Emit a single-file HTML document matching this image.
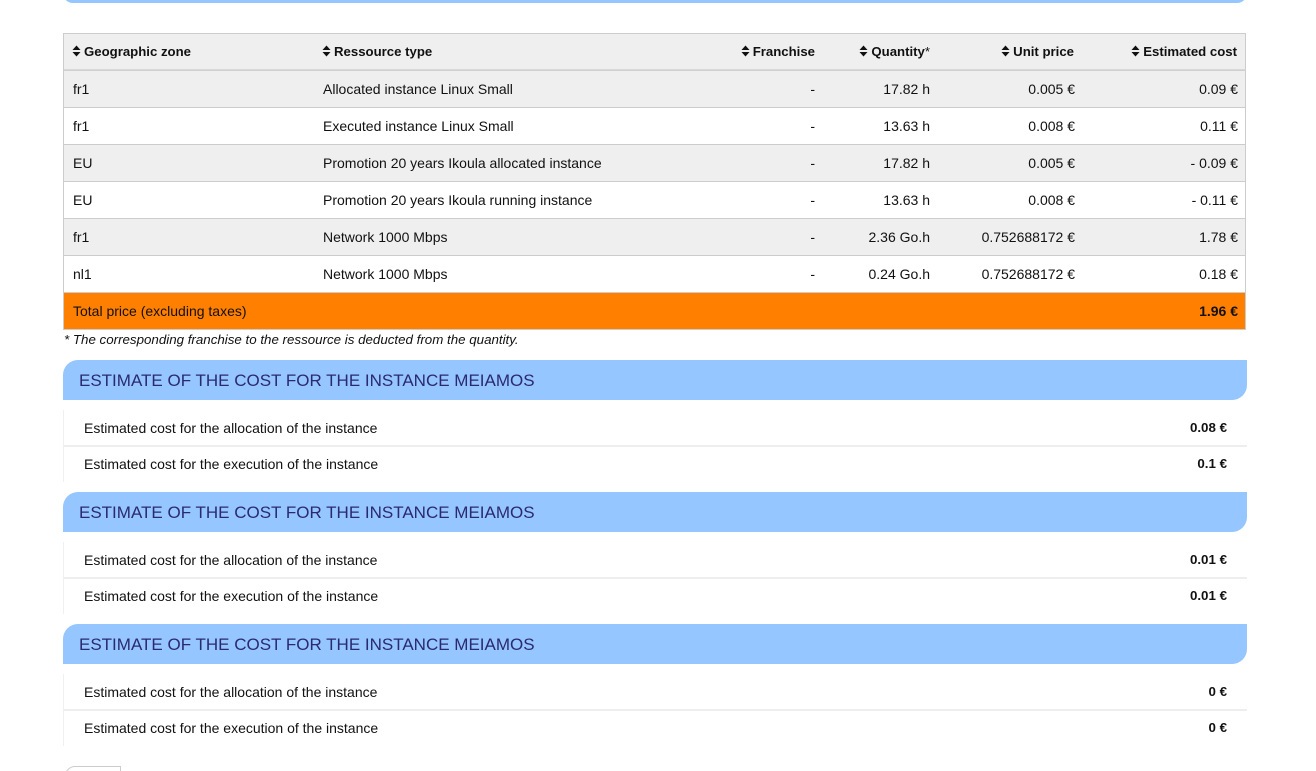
<!DOCTYPE html>
<html><head><meta charset="utf-8">
<style>
html,body{margin:0;padding:0;background:#fff;width:1316px;height:771px;overflow:hidden}
body{position:relative;font-family:"Liberation Sans",Arial,sans-serif;font-size:14px;color:#111}
.a{position:absolute}
.t{position:absolute;white-space:nowrap;line-height:16px}
.r{text-align:right}
.b{font-weight:bold}
.h{font-size:13.2px;top:44px}
.v{font-size:13.33px}
.row{position:absolute;left:63px;width:1183px;height:37px;box-sizing:border-box;border:1px solid #ccc;border-bottom:0}
.g{background:#efefef}
.w{background:#fff}
.bar{position:absolute;left:63px;width:1184px;height:40px;background:#95c6ff;border-radius:15px 0 15px 0}
.bar span{position:absolute;left:16px;top:12px;font-size:17px;line-height:18px;color:#2b2a6f;white-space:nowrap}
.ll{position:absolute;left:63px;width:1px;height:72px;background:#f0f0f0}
.sep{position:absolute;left:63px;width:1184px;height:2px;background:#eee}
svg.s{position:absolute;width:9px;height:12px;top:45px}
</style></head><body>

<div class="a" style="left:63px;top:-12px;width:1184px;height:15px;background:#95c6ff;border-radius:0 0 10px 10px"></div>

<div class="row g" style="top:33px;height:38px;border-bottom:2px solid #d8d8d8"></div>
<div class="row g" style="top:70px;border-top:1px solid #d0d0d0"></div>
<div class="row w" style="top:107px"></div>
<div class="row g" style="top:144px"></div>
<div class="row w" style="top:181px"></div>
<div class="row g" style="top:218px"></div>
<div class="row w" style="top:255px"></div>
<div class="row" style="top:292px;background:#ff7f00;height:38px;border-bottom:1px solid #ccc"></div>

<svg class="s" style="left:72px" viewBox="0 0 9 12"><path d="M4.500 0.500L8.500 5H0.500ZM4.500 11.500L0.500 7H8.500Z" fill="#111"/></svg>
<div class="t b h" style="left:84px">Geographic zone</div>
<svg class="s" style="left:322px" viewBox="0 0 9 12"><path d="M4.500 0.500L8.500 5H0.500ZM4.500 11.500L0.500 7H8.500Z" fill="#111"/></svg>
<div class="t b h" style="left:334px">Ressource type</div>
<svg class="s" style="left:741px" viewBox="0 0 9 12"><path d="M4.500 0.500L8.500 5H0.500ZM4.500 11.500L0.500 7H8.500Z" fill="#111"/></svg>
<div class="t b r h" style="right:501px">Franchise</div>
<svg class="s" style="left:859px" viewBox="0 0 9 12"><path d="M4.500 0.500L8.500 5H0.500ZM4.500 11.500L0.500 7H8.500Z" fill="#111"/></svg>
<div class="t r h" style="right:386px"><b>Quantity</b>*</div>
<svg class="s" style="left:1001px" viewBox="0 0 9 12"><path d="M4.500 0.500L8.500 5H0.500ZM4.500 11.500L0.500 7H8.500Z" fill="#111"/></svg>
<div class="t b r h" style="right:242px">Unit price</div>
<svg class="s" style="left:1131px" viewBox="0 0 9 12"><path d="M4.500 0.500L8.500 5H0.500ZM4.500 11.500L0.500 7H8.500Z" fill="#111"/></svg>
<div class="t b r h" style="right:79px">Estimated cost</div>

<div class="t" style="left:73px;top:81px">fr1</div>
<div class="t" style="left:323px;top:81px">Allocated instance Linux Small</div>
<div class="t r" style="right:501px;top:81px">-</div>
<div class="t r" style="right:386px;top:81px">17.82 h</div>
<div class="t r" style="right:241px;top:81px">0.005 €</div>
<div class="t r" style="right:78px;top:81px">0.09 €</div>

<div class="t" style="left:73px;top:118px">fr1</div>
<div class="t" style="left:323px;top:118px">Executed instance Linux Small</div>
<div class="t r" style="right:501px;top:118px">-</div>
<div class="t r" style="right:386px;top:118px">13.63 h</div>
<div class="t r" style="right:241px;top:118px">0.008 €</div>
<div class="t r" style="right:78px;top:118px">0.11 €</div>

<div class="t" style="left:73px;top:155px">EU</div>
<div class="t" style="left:323px;top:155px">Promotion 20 years Ikoula allocated instance</div>
<div class="t r" style="right:501px;top:155px">-</div>
<div class="t r" style="right:386px;top:155px">17.82 h</div>
<div class="t r" style="right:241px;top:155px">0.005 €</div>
<div class="t r" style="right:78px;top:155px">- 0.09 €</div>

<div class="t" style="left:73px;top:192px">EU</div>
<div class="t" style="left:323px;top:192px">Promotion 20 years Ikoula running instance</div>
<div class="t r" style="right:501px;top:192px">-</div>
<div class="t r" style="right:386px;top:192px">13.63 h</div>
<div class="t r" style="right:241px;top:192px">0.008 €</div>
<div class="t r" style="right:78px;top:192px">- 0.11 €</div>

<div class="t" style="left:73px;top:229px">fr1</div>
<div class="t" style="left:323px;top:229px">Network 1000 Mbps</div>
<div class="t r" style="right:501px;top:229px">-</div>
<div class="t r" style="right:386px;top:229px">2.36 Go.h</div>
<div class="t r" style="right:241px;top:229px">0.752688172 €</div>
<div class="t r" style="right:78px;top:229px">1.78 €</div>

<div class="t" style="left:73px;top:266px">nl1</div>
<div class="t" style="left:323px;top:266px">Network 1000 Mbps</div>
<div class="t r" style="right:501px;top:266px">-</div>
<div class="t r" style="right:386px;top:266px">0.24 Go.h</div>
<div class="t r" style="right:241px;top:266px">0.752688172 €</div>
<div class="t r" style="right:78px;top:266px">0.18 €</div>

<div class="t" style="left:73px;top:303px">Total price (excluding taxes)</div>
<div class="t b r" style="right:78px;top:303px">1.96 €</div>

<div class="t" style="left:64px;top:332px;font-size:13.33px;font-style:italic">* The corresponding franchise to the ressource is deducted from the quantity.</div>

<div class="bar" style="top:360px"><span>ESTIMATE OF THE COST FOR THE INSTANCE MEIAMOS</span></div>
<div class="ll" style="top:410px"></div>
<div class="sep" style="top:445px"></div>
<div class="t" style="left:84px;top:420px">Estimated cost for the allocation of the instance</div>
<div class="t" style="left:84px;top:456px">Estimated cost for the execution of the instance</div>
<div class="t b r v" style="right:89px;top:420px">0.08 €</div>
<div class="t b r v" style="right:89px;top:456px">0.1 €</div>

<div class="bar" style="top:492px"><span>ESTIMATE OF THE COST FOR THE INSTANCE MEIAMOS</span></div>
<div class="ll" style="top:542px"></div>
<div class="sep" style="top:577px"></div>
<div class="t" style="left:84px;top:552px">Estimated cost for the allocation of the instance</div>
<div class="t" style="left:84px;top:588px">Estimated cost for the execution of the instance</div>
<div class="t b r v" style="right:89px;top:552px">0.01 €</div>
<div class="t b r v" style="right:89px;top:588px">0.01 €</div>

<div class="bar" style="top:624px"><span>ESTIMATE OF THE COST FOR THE INSTANCE MEIAMOS</span></div>
<div class="ll" style="top:674px"></div>
<div class="sep" style="top:709px"></div>
<div class="t" style="left:84px;top:684px">Estimated cost for the allocation of the instance</div>
<div class="t" style="left:84px;top:720px">Estimated cost for the execution of the instance</div>
<div class="t b r v" style="right:89px;top:684px">0 €</div>
<div class="t b r v" style="right:89px;top:720px">0 €</div>

<div class="a" style="left:65px;top:766px;width:54px;height:20px;border:1px solid #ccc;border-radius:10px 0 0 0;background:#fff"></div>

</body></html>
